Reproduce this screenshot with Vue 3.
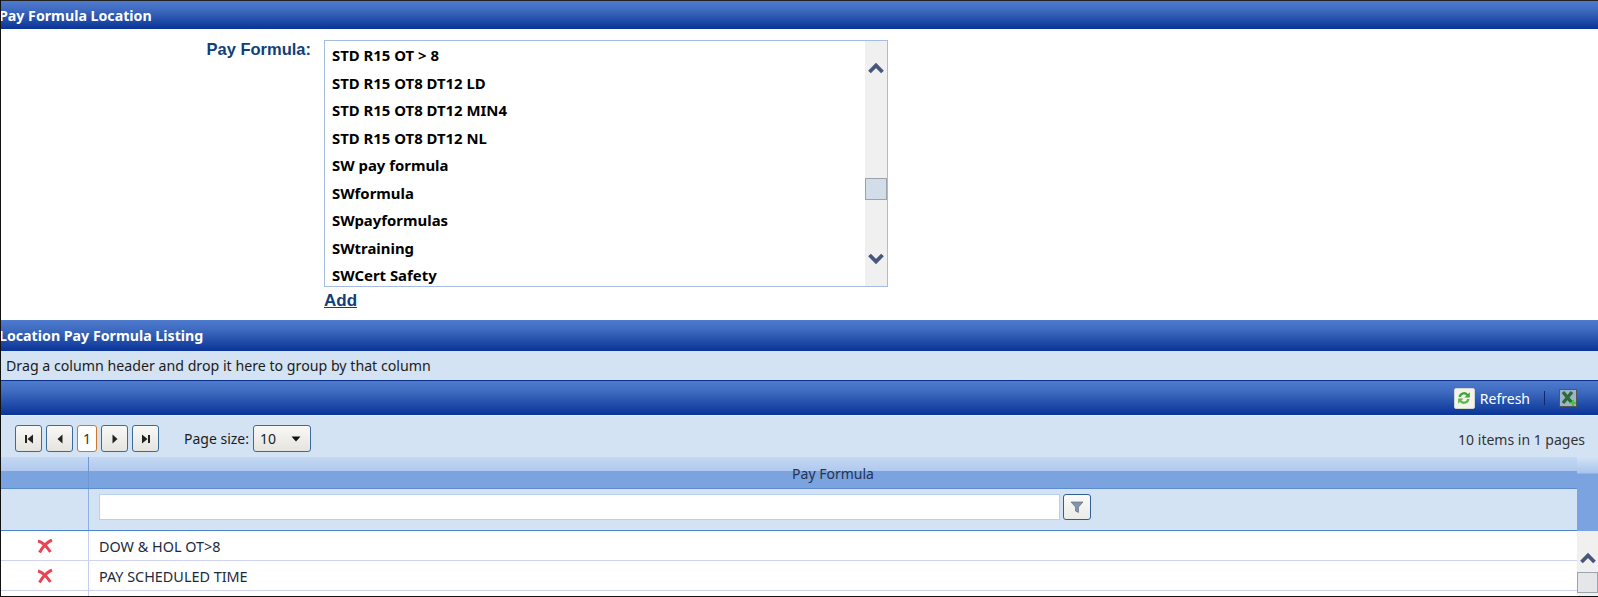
<script setup>
const formulas = [
  'STD R15 OT > 8',
  'STD R15 OT8 DT12 LD',
  'STD R15 OT8 DT12 MIN4',
  'STD R15 OT8 DT12 NL',
  'SW pay formula',
  'SWformula',
  'SWpayformulas',
  'SWtraining',
  'SWCert Safety'
]

const rows = ['DOW & HOL OT>8', 'PAY SCHEDULED TIME']
</script>

<template>
  <div class="page">
    <div class="bar title-bar"><span class="bar-text">Pay Formula Location</span></div>

    <div class="form-area">
      <div class="field-label">Pay Formula:</div>
      <div class="field-body">
        <div class="listbox">
          <ul class="list-items">
            <li v-for="f in formulas" :key="f">{{ f }}</li>
          </ul>
          <div class="list-scroll">
            <svg class="chev chev-up" viewBox="0 0 16 12"><path d="M1.5 10 L8 3.5 L14.5 10" fill="none" stroke="#47577c" stroke-width="3.8" /></svg>
            <div class="thumb"></div>
            <svg class="chev chev-down" viewBox="0 0 16 12"><path d="M1.5 2 L8 8.5 L14.5 2" fill="none" stroke="#47577c" stroke-width="3.8" /></svg>
          </div>
        </div>
        <a class="add-link">Add</a>
      </div>
    </div>

    <div class="bar listing-bar"><span class="bar-text">Location Pay Formula Listing</span></div>
    <div class="group-panel">Drag a column header and drop it here to group by that column</div>

    <div class="bar toolbar">
      <span class="refresh-icon">
        <svg viewBox="0 0 20 20" width="18" height="18">
          <path d="M4 9 A6 6 0 0 1 14.5 5.5 L16.5 3.5 V9.5 H10.5 L12.8 7.2 A3.6 3.6 0 0 0 6.6 9 Z" fill="#3fa33a" />
          <path d="M16 11 A6 6 0 0 1 5.5 14.5 L3.5 16.5 V10.5 H9.5 L7.2 12.8 A3.6 3.6 0 0 0 13.4 11 Z" fill="#5cb84a" />
        </svg>
      </span>
      <span class="refresh-text">Refresh</span>
      <span class="tool-sep"></span>
      <span class="excel-icon">
        <svg viewBox="0 0 18 18" width="18" height="18">
          <rect x="0.5" y="0.5" width="17" height="17" fill="#9fb4c8" stroke="#555" />
          <path d="M4 3 L13 14 M13 3 L4 14" stroke="#2f6b3a" stroke-width="3.4" />
          <path d="M11 14 H17 M14 11 V17" stroke="#45c24a" stroke-width="2" />
        </svg>
      </span>
    </div>

    <div class="pager">
      <div class="pager-btns">
        <button class="pg-btn">
          <svg viewBox="0 0 12 12" width="12" height="12"><path d="M2 2 H4 V10 H2 Z M10 1.5 V10.5 L4.5 6 Z" fill="#222" /></svg>
        </button>
        <button class="pg-btn">
          <svg viewBox="0 0 12 12" width="12" height="12"><path d="M8.5 1.5 V10.5 L3.5 6 Z" fill="#222" /></svg>
        </button>
        <span class="pg-current">1</span>
        <button class="pg-btn">
          <svg viewBox="0 0 12 12" width="12" height="12"><path d="M3.5 1.5 V10.5 L8.5 6 Z" fill="#222" /></svg>
        </button>
        <button class="pg-btn">
          <svg viewBox="0 0 12 12" width="12" height="12"><path d="M2 1.5 V10.5 L7.5 6 Z M8 2 H10 V10 H8 Z" fill="#222" /></svg>
        </button>
        <span class="size-label">Page size:</span>
        <span class="size-select">
          <span>10</span>
          <svg viewBox="0 0 10 6" width="10" height="6"><path d="M0.5 0.5 H9.5 L5 5.5 Z" fill="#111" /></svg>
        </span>
      </div>
      <div class="pager-info">10 items in 1 pages</div>
    </div>

    <div class="grid">
      <div class="grid-main">
        <div class="grid-head">
          <div class="cell-x head-x"></div>
          <div class="head-title">Pay Formula</div>
        </div>
        <div class="filter-row">
          <div class="cell-x"></div>
          <div class="filter-cell">
            <input class="filter-input" type="text" />
            <button class="filter-btn">
              <svg viewBox="0 0 14 14" width="14" height="14"><path d="M1 2 H13 L8.5 7 V12.5 L5.5 11 V7 Z" fill="#8595a8" stroke="#51627a" stroke-width="0.6" /></svg>
            </button>
          </div>
        </div>
        <div v-for="r in rows" :key="r" class="data-row">
          <div class="cell-x">
            <svg viewBox="0 0 16 14" width="16" height="14"><path d="M1 2 C6 3 10 8 13.5 13 M15 1 C10 3 5.5 8 2.5 13.5" fill="none" stroke="#ea4452" stroke-width="3" /></svg>
          </div>
          <div class="cell-text">{{ r }}</div>
        </div>
        <div class="data-row stub"><div class="cell-x"></div><div class="cell-text"></div></div>
      </div>
      <div class="grid-scroll">
        <div class="scroll-head"></div>
        <div class="scroll-track">
          <svg class="chev-grid" viewBox="0 0 16 12"><path d="M1.5 10 L8 3.5 L14.5 10" fill="none" stroke="#47577c" stroke-width="3.8" /></svg>
          <div class="grid-thumb"></div>
        </div>
      </div>
    </div>
  </div>
</template>

<style scoped>
.page {
  width: 1598px;
  height: 597px;
  box-sizing: border-box;
  border-left: 1px solid #111;
  border-bottom: 1px solid #111;
  background: #fff;
  overflow: hidden;
  display: flex;
  flex-direction: column;
  font-family: "Noto Sans", "Open Sans", sans-serif;
}
.bar {
  flex: none;
  background: linear-gradient(#4f7bcf, #3f6cc0 30%, #0f3a9c 92%, #0a3596);
  color: #fff;
  font-weight: 700;
  font-size: 14.2px;
  display: flex;
  align-items: center;
  overflow: hidden;
}
.bar-text {
  margin-left: -2px;
}
.title-bar {
  height: 28px;
  border-top: 1px solid #222;
}
.form-area {
  flex: none;
  height: 291px;
  display: flex;
  box-sizing: border-box;
  padding-top: 11px;
}
.field-label {
  width: 310px;
  text-align: right;
  font-family: "Liberation Sans", Arial, sans-serif;
  font-weight: 700;
  font-size: 16.5px;
  color: #123f78;
}
.field-body {
  margin-left: 13px;
  display: flex;
  flex-direction: column;
  align-items: flex-start;
}
.listbox {
  width: 564px;
  height: 247px;
  box-sizing: border-box;
  border: 1px solid #a6bde3;
  display: flex;
}
.list-items {
  flex: 1;
  margin: 0;
  padding: 0 0 0 7px;
  list-style: none;
  overflow: hidden;
  color: #000;
  font-weight: 700;
  font-size: 14.9px;
}
.list-items li {
  height: 27.5px;
  line-height: 27.5px;
}
.list-items li:first-child {
  margin-top: 1px;
}
.list-scroll {
  width: 22px;
  background: #f0f0f0;
  position: relative;
}
.chev {
  position: absolute;
  left: 3px;
  width: 16px;
  height: 12px;
}
.chev-up { top: 21px; }
.chev-down { top: 212px; }
.thumb {
  position: absolute;
  top: 137px;
  left: 0;
  width: 20px;
  height: 20px;
  background: #d3dce9;
  border: 1px solid #9da3ab;
}
.add-link {
  margin-top: 4px;
  font-family: "Liberation Sans", Arial, sans-serif;
  font-weight: 700;
  font-size: 17px;
  color: #123f78;
  text-decoration: underline;
}
.listing-bar {
  height: 31px;
}
.group-panel {
  flex: none;
  height: 29px;
  box-sizing: border-box;
  background: #d3e3f3;
  padding-left: 5px;
  font-size: 14.2px;
  line-height: 29px;
  color: #1c1c1c;
}
.toolbar {
  height: 35px;
  box-sizing: border-box;
  border-top: 1px solid #0a2f86;
  justify-content: flex-end;
  font-weight: 400;
  padding-right: 21px;
}
.refresh-icon {
  width: 21px;
  height: 21px;
  box-sizing: border-box;
  background: #f4f3ea;
  border: 1px solid #cdd6d0;
  border-radius: 2px;
  display: flex;
  align-items: center;
  justify-content: center;
}
.refresh-text {
  margin-left: 5px;
  font-size: 14px;
}
.tool-sep {
  width: 1px;
  height: 14px;
  background: #0c2a6e;
  margin-left: 14px;
  margin-right: 14px;
}
.excel-icon {
  height: 18px;
}
.pager {
  flex: none;
  height: 42px;
  box-sizing: border-box;
  background: #d3e3f3;
  border-top: 1px solid #e4edf7;
  display: flex;
  align-items: flex-start;
  justify-content: space-between;
  padding: 9px 13px 0 14px;
}
.pager-btns {
  display: flex;
  align-items: center;
}
.pg-btn {
  width: 27px;
  height: 27px;
  box-sizing: border-box;
  padding: 0;
  margin-right: 4px;
  border: 1px solid #3d6a9c;
  border-radius: 3px;
  background: linear-gradient(#f8f8f6, #e6e4de);
  display: flex;
  align-items: center;
  justify-content: center;
}
.pg-current {
  width: 20px;
  height: 27px;
  box-sizing: border-box;
  margin-right: 4px;
  border: 1px solid #d0772e;
  border-radius: 3px;
  background: #fff;
  font-size: 14px;
  line-height: 25px;
  text-align: center;
  color: #333;
}
.size-label {
  margin-left: 21px;
  font-size: 14px;
  color: #1c1c1c;
}
.size-select {
  margin-left: 4px;
  width: 58px;
  height: 27px;
  box-sizing: border-box;
  border: 1px solid #3d6a9c;
  border-radius: 3px;
  background: linear-gradient(#f8f8f6, #e6e4de);
  display: flex;
  align-items: center;
  justify-content: space-between;
  padding: 0 9px 0 6px;
  font-size: 14px;
  color: #222;
}
.pager-info {
  margin-top: 5px;
  font-size: 14px;
  color: #333;
}
.grid {
  flex: 1;
  display: flex;
  min-height: 0;
}
.grid-main {
  flex: 1;
  min-width: 0;
}
.grid-head {
  height: 32px;
  display: flex;
  background: linear-gradient(#c5d8f3, #b0c9ee 45%, #7aa3e0 46%, #7aa3e0);
  border-bottom: 1px solid #5c8ccf;
  box-sizing: border-box;
}
.cell-x {
  flex: none;
  width: 88px;
  box-sizing: border-box;
  border-right: 1px solid #8fb0e2;
  display: flex;
  align-items: center;
  justify-content: center;
}
.head-x {
  border-right-color: #6f97d6;
}
.head-title {
  flex: 1;
  text-align: center;
  font-size: 14px;
  line-height: 18px;
  padding-top: 8px;
  box-sizing: border-box;
  color: #243450;
}
.filter-row {
  height: 42px;
  box-sizing: border-box;
  display: flex;
  background: #d3e3f3;
  border-bottom: 1px solid #4d86c9;
}
.filter-cell {
  flex: 1;
  display: flex;
  align-items: center;
  padding: 0 0 6px 10px;
  gap: 3px;
}
.filter-input {
  width: 961px;
  height: 26px;
  box-sizing: border-box;
  border: 1px solid #b8d0f0;
  background: #fff;
  padding: 0;
  outline: none;
}
.filter-btn {
  width: 28px;
  height: 26px;
  box-sizing: border-box;
  padding: 0;
  border: 1px solid #2f5f94;
  border-radius: 3px;
  background: linear-gradient(#fafaf8, #ecebe6);
  display: flex;
  align-items: center;
  justify-content: center;
}
.data-row {
  height: 30px;
  box-sizing: border-box;
  display: flex;
  border-bottom: 1px solid #d0d3f0;
}
.data-row.stub {
  border-bottom: 0;
}
.data-row .cell-x {
  border-right-color: #c3cff0;
}
.cell-text {
  flex: 1;
  padding-left: 10px;
  font-size: 14.4px;
  line-height: 32px;
  height: 29px;
  color: #1c2a3c;
}
.grid-scroll {
  flex: none;
  width: 21px;
  display: flex;
  flex-direction: column;
}
.scroll-head {
  height: 74px;
  background: linear-gradient(#d3e3f3, #a9c4ec 16px, #7aa3e0 17px);
}
.scroll-track {
  flex: 1;
  background: #f0f0f0;
  position: relative;
}
.chev-grid {
  position: absolute;
  left: 3px;
  top: 21px;
  width: 16px;
  height: 12px;
}
.grid-thumb {
  position: absolute;
  top: 41px;
  left: 0;
  width: 21px;
  height: 21px;
  background: #e4e6ea;
  border: 1px solid #9da3ab;
  box-sizing: border-box;
}
</style>

<style>
html, body { margin: 0; background: #fff; }
</style>
